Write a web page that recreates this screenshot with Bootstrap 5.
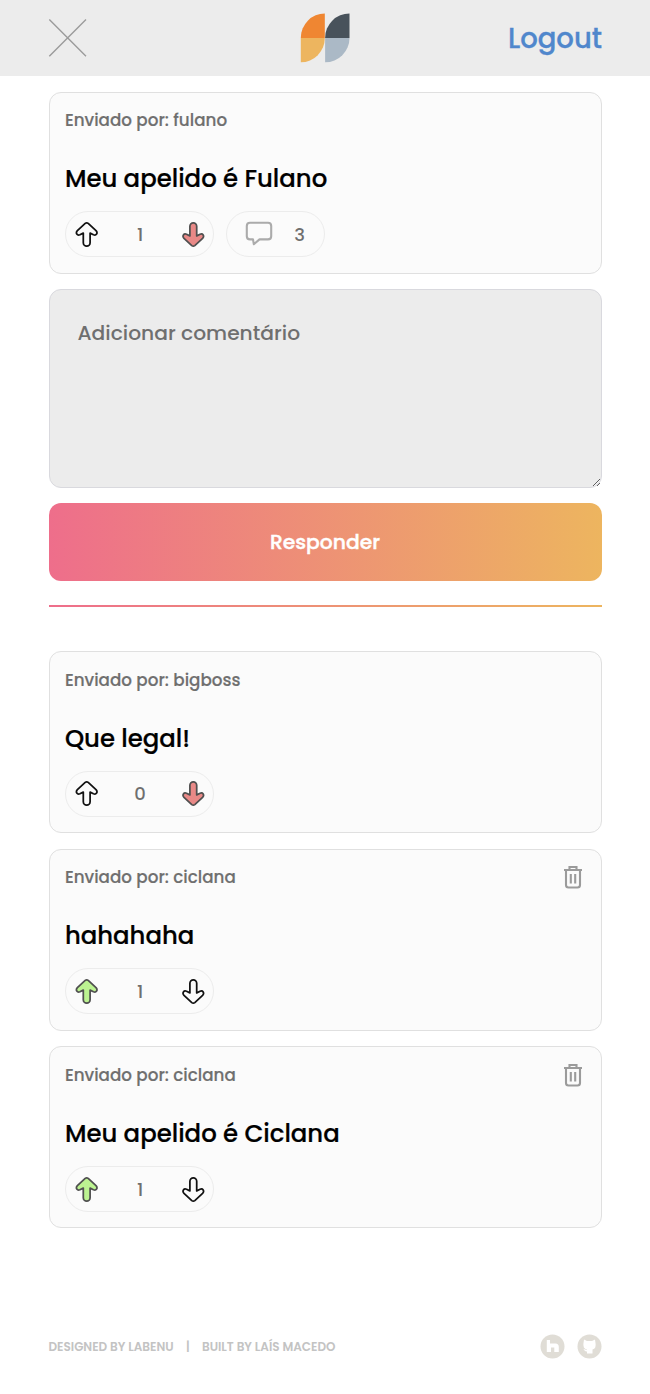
<!DOCTYPE html>
<html lang="pt-br">
<head>
<meta charset="utf-8">
<meta name="viewport" content="width=device-width, initial-scale=1">
<title>Labeddit</title>
<link href="https://cdn.jsdelivr.net/npm/bootstrap@5.3.0/dist/css/bootstrap.min.css" rel="stylesheet">
<style>
body{font-family:Poppins,Inter,sans-serif;font-weight:500;color:#000;background:#fff;min-height:1394px}
svg{display:block;flex:none}
.page-head{height:76px;background:#ececec;padding:0 48px}
.logo{margin-left:54px}
.logout{font-size:27.5px;color:#5087cc;line-height:40px;padding-top:2px;-webkit-text-stroke:.3px #5087cc}
.page-main{padding:15.5px 48.5px 0}
.post{height:182px;border:1.4px solid #e0e0e0;border-radius:12px;background:#fbfbfb;padding:14.5px 15.4px}
.post+.post{margin-top:15.7px}
.author{font-size:16.75px;line-height:26px;color:#6f6f6f;-webkit-text-stroke:.15px #6f6f6f}
.title{font-size:24.4px;line-height:38px;margin:27px 0 13.2px;-webkit-text-stroke:.2px #000}
.pill{height:46px;border:1.4px solid #ececec;border-radius:23px;color:#6f6f6f;font-size:18px}
.votes{width:149px;padding:0 8px 0 9.5px}
.replies{width:99px;padding:0 19px 0 18px}
.flip{transform:rotate(180deg)}
.bin{margin-right:2px}
.reply-box{height:199px;margin-top:15.5px;background:#ececec;border:1.4px solid #d9d9de;border-radius:12px;padding:27px 28px;font-size:20.25px;font-weight:500;line-height:32px;resize:vertical;display:block}
.reply-box::placeholder{color:#6f6f6f;opacity:1}
.btn-reply{height:77.5px;margin-top:15px;border:0;border-radius:12px;background:linear-gradient(90deg,#ee6e8b,#edb55f);color:#fff;font-size:20.3px;font-weight:500;padding:0;-webkit-text-stroke:.4px #fff}
.rule{height:1.6px;margin:24.5px 0 44.5px;background:linear-gradient(90deg,#ee6e8b,#edb55f)}
.page-foot{margin-top:102.3px;padding:0 47.6px 0 48.5px;font-size:12px;line-height:30px;color:#c3c3c3;font-weight:600}
.credits{padding-top:1px}
.bar{margin:0 12.3px}
</style>
</head>
<body>
<svg width="0" height="0" class="position-absolute" aria-hidden="true">
<symbol id="up" viewBox="0 0 24 27"><path d="M10.200 2.400Q11.700 1.200 13.200 2.400L21 9.600C23.200 12 21.200 14.900 18.500 13.800L15.100 12.100V21.800a3.300 3.300 0 0 1-6.800 0V12.100L4.900 13.800C2.200 14.900.200 12 2.400 9.600Z" stroke-width="1.750" stroke-linejoin="round"/></symbol>
<symbol id="trash" viewBox="0 0 20 24"><path d="M1 5h18M6.500 4.500V2h7v2.500M3 5.500V20q0 2.500 2.500 2.500h9q2.500 0 2.500-2.500V5.500M7.800 9v9.500M12.200 9v9.500" fill="none" stroke="#9b9b9b" stroke-width="2.100"/></symbol>
</svg>
<header class="page-head d-flex justify-content-between align-items-center">
<svg width="40" height="40" viewBox="0 0 40 40"><path d="M1.300 1.500 38 38.300M38 1.500 1.300 38.300" stroke="#9b9b9b" stroke-width="1.400"/></svg>
<svg class="logo" width="50" height="50" viewBox="0 0 50 50"><path fill="#ef8632" d="M.800 25A24 24.500 0 0 1 24.800.500V25Z"/><path fill="#edb55f" d="M.800 25H24.800A24 24.300 0 0 1 .800 49.300Z"/><path fill="#48525b" d="M25.100 25A24.400 24.500 0 0 1 49.500.500V25Z"/><path fill="#abb9c6" d="M25.100 25H49.500A24.400 24.300 0 0 1 25.100 49.300Z"/></svg>
<span class="logout">Logout</span>
</header>
<main class="page-main">
<article class="post">
<div class="author">Enviado por: fulano</div>
<div class="title">Meu apelido é Fulano</div>
<div class="d-flex gap-2">
<div class="pill votes d-flex justify-content-between align-items-center"><svg width="24" height="27" fill="none" stroke="#111"><use href="#up"/></svg><span>1</span><svg class="flip" width="24" height="27" fill="#e98987" stroke="#505050"><use href="#up"/></svg></div>
<div class="pill replies ms-1 d-flex justify-content-between align-items-center"><svg width="28" height="26" viewBox="0 0 28 26"><path d="M5 1.800H23q3.200 0 3.200 3.200V15.200q0 3.200-3.200 3.200H14.500L8.800 23.200 8 18.400H5q-3.200 0-3.200-3.200V5q0-3.200 3.200-3.200Z" fill="none" stroke="#ababab" stroke-width="2.100" stroke-linejoin="round"/></svg><span>3</span></div>
</div>
</article>
<textarea class="reply-box w-100" placeholder="Adicionar comentário"></textarea>
<button class="btn-reply w-100 d-block">Responder</button>
<div class="rule"></div>
<article class="post">
<div class="author">Enviado por: bigboss</div>
<div class="title">Que legal!</div>
<div class="pill votes d-flex justify-content-between align-items-center"><svg width="24" height="27" fill="none" stroke="#111"><use href="#up"/></svg><span>0</span><svg class="flip" width="24" height="27" fill="#e98987" stroke="#505050"><use href="#up"/></svg></div>
</article>
<article class="post">
<div class="d-flex justify-content-between align-items-center"><div class="author">Enviado por: ciclana</div><svg width="20" height="24" class="bin"><use href="#trash"/></svg></div>
<div class="title">hahahaha</div>
<div class="pill votes d-flex justify-content-between align-items-center"><svg width="24" height="27" fill="#bcf391" stroke="#505050"><use href="#up"/></svg><span>1</span><svg class="flip" width="24" height="27" fill="none" stroke="#111"><use href="#up"/></svg></div>
</article>
<article class="post">
<div class="d-flex justify-content-between align-items-center"><div class="author">Enviado por: ciclana</div><svg width="20" height="24" class="bin"><use href="#trash"/></svg></div>
<div class="title">Meu apelido é Ciclana</div>
<div class="pill votes d-flex justify-content-between align-items-center"><svg width="24" height="27" fill="#bcf391" stroke="#505050"><use href="#up"/></svg><span>1</span><svg class="flip" width="24" height="27" fill="none" stroke="#111"><use href="#up"/></svg></div>
</article>
</main>
<footer class="page-foot d-flex justify-content-between align-items-center">
<div class="credits d-flex"><span>DESIGNED BY LABENU</span><span class="bar">|</span><span>BUILT BY LAÍS MACEDO</span></div>
<div class="d-flex gap-2">
<svg width="25" height="25" viewBox="0 0 25 25"><circle cx="12.500" cy="12.500" r="12" fill="#e0ddd6"/><path fill="#fff" d="M6.800 6H10V9.500H15.500Q18.800 9.500 18.800 13V18H14.300V13.500H11V18H6.800Z"/></svg>
<svg width="25" height="25" viewBox="0 0 25 25" class="ms-1"><circle cx="12.500" cy="12.500" r="12" fill="#e0ddd6"/><path fill="#fff" d="M7 5.500 10 7H15L18 5.500 18.500 9Q19.500 14.500 15.500 15.500V19.500H10V17.500Q8 18 6.300 14.800L8 15.500 10 16V15.500Q5.500 14.500 6.500 9Z"/></svg>
</div>
</footer>
<script src="https://cdn.jsdelivr.net/npm/bootstrap@5.3.0/dist/js/bootstrap.bundle.min.js"></script>
</body>
</html>
